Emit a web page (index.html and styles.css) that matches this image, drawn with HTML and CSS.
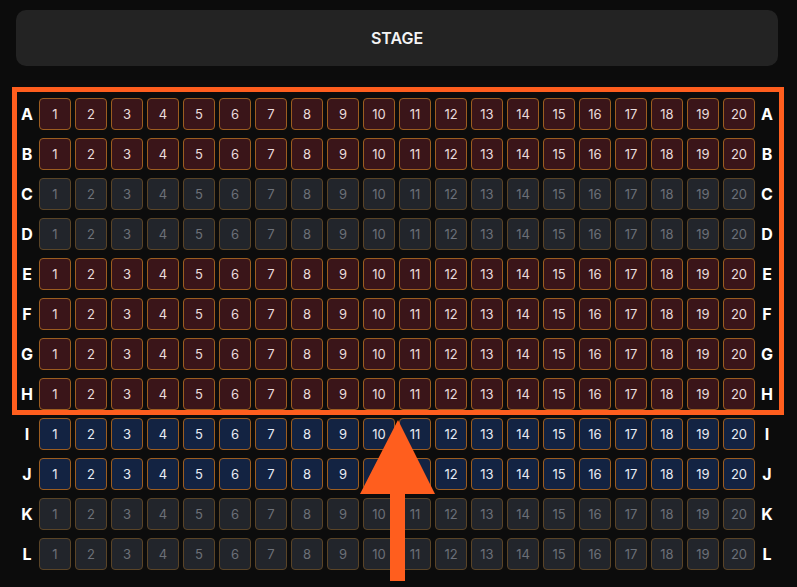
FILE: index.html
```html
<!DOCTYPE html>
<html lang="en">
<head>
<meta charset="utf-8">
<title>Seat map</title>
<link rel="stylesheet" href="styles.css">
</head>
<body>
<div class="page">
  <div class="stage">STAGE</div>
  <div class="rows" id="rows"></div>
</div>
<div class="highlight"></div>
<svg class="arrow" width="80" height="170" viewBox="0 0 80 170">
  <polygon points="40,2 2,76 32,76 32,163 47,163 47,76 77,76" fill="#ff5e1e"/>
</svg>
<script src="app.js"></script>
</body>
</html>
```
FILE: app.js
```js
var rows = [
  ['A', 'sold'], ['B', 'sold'], ['C', 'off'], ['D', 'off'],
  ['E', 'sold'], ['F', 'sold'], ['G', 'sold'], ['H', 'sold'],
  ['I', 'free'], ['J', 'free'], ['K', 'off'], ['L', 'off']
];
var wrap = document.getElementById('rows');
rows.forEach(function (r) {
  var row = document.createElement('div');
  row.className = 'row';
  var l = document.createElement('span');
  l.className = 'label';
  l.textContent = r[0];
  row.appendChild(l);
  for (var i = 1; i <= 20; i++) {
    var s = document.createElement('span');
    s.className = 'seat seat-' + r[1];
    s.textContent = i;
    row.appendChild(s);
  }
  var l2 = document.createElement('span');
  l2.className = 'label';
  l2.textContent = r[0];
  row.appendChild(l2);
  wrap.appendChild(row);
});
```
FILE: styles.css
```css
html, body {
  margin: 0;
  padding: 0;
  background: #0c0c0c;
  font-family: Inter, "Liberation Sans", sans-serif;
  color: #ffffff;
  overflow: hidden;
}

.page {
  width: 762px;
  margin-left: 16px;
  padding-top: 10px;
}

.stage {
  height: 56px;
  border-radius: 10px;
  background: #232323;
  display: flex;
  align-items: center;
  justify-content: center;
  font-size: 16px;
  font-weight: 600;
  letter-spacing: 0;
  color: #f4f4f4;
}

.rows {
  margin-top: 32px;
  display: flex;
  flex-direction: column;
  align-items: center;
  gap: 8px;
}

.row {
  display: flex;
  align-items: center;
  gap: 4px;
}

.label {
  width: 16px;
  text-align: center;
  font-size: 16px;
  font-weight: 700;
  color: #ffffff;
}

.seat {
  width: 32px;
  height: 32px;
  box-sizing: border-box;
  border-radius: 4px;
  border: 1px solid #9c5d20;
  display: flex;
  align-items: center;
  justify-content: center;
  font-size: 13px;
  font-weight: 400;
}

.seat-sold {
  background: #3a1519;
  color: #eadcdc;
}

.seat-free {
  background: #132342;
  color: #e8ecf4;
}

.seat-off {
  background: #22252b;
  border-color: #5a4427;
  color: #6c7078;
}

.highlight {
  position: absolute;
  left: 12px;
  top: 87px;
  width: 772px;
  height: 328px;
  box-sizing: border-box;
  border: 5px solid #ff5e1e;
}

.arrow {
  position: absolute;
  left: 358px;
  top: 418px;
}
```
